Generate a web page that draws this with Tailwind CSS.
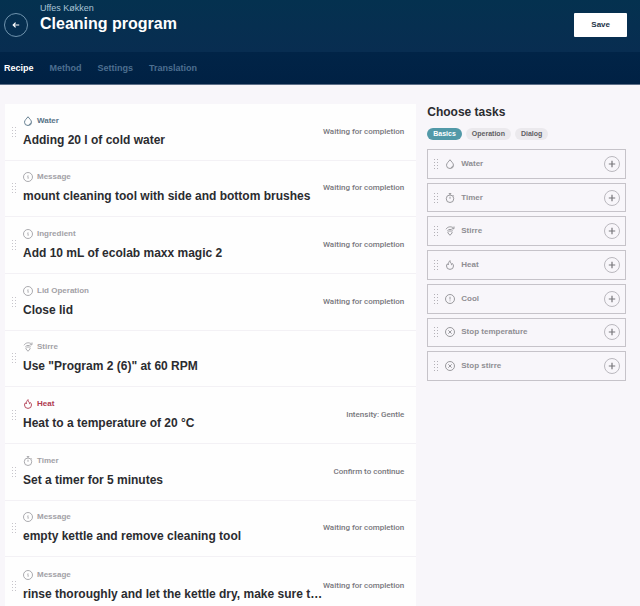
<!DOCTYPE html>
<html lang="en">
<head>
<meta charset="utf-8">
<meta name="viewport" content="width=device-width, initial-scale=1">
<title>Cleaning program</title>
<script src="https://cdn.jsdelivr.net/npm/@tailwindcss/browser@4"></script>
</head>
<body class="bg-[#f8f6fa] font-['Liberation_Sans',Arial,sans-serif] text-[#2b2c30]">
<svg class="hidden" aria-hidden="true">
  <defs>
    <symbol id="water" viewBox="0 0 20 20"><path d="M10 1.500C7.500 5 3 8.500 3 12.500a7 6.500 0 0 0 14 0C17 8.500 12.500 5 10 1.500Z"/><path d="M16.500 14c-1.500 0-3.500 1.500-4 4"/></symbol>
    <symbol id="info" viewBox="0 0 20 20"><circle cx="10" cy="10" r="9"/><path d="M9 9h1.200v4.500M10 6v1.200"/></symbol>
    <symbol id="alert" viewBox="0 0 20 20"><circle cx="10" cy="10" r="9"/><path d="M10 5.500v5.500M10 13v1.500"/></symbol>
    <symbol id="stop" viewBox="0 0 20 20"><circle cx="10" cy="10" r="9"/><path d="m6.700 6.700 6.600 6.600M13.300 6.700l-6.600 6.600"/></symbol>
    <symbol id="timer" viewBox="0 0 20 20"><circle cx="10" cy="11.500" r="7.500"/><path d="M7.500 1.200h5M10 1.200v3M10 7.500v4M16 4.500l1.700 1.700"/></symbol>
    <symbol id="stir" viewBox="0 0 20 20"><path d="M2 6.500C5.500.500 13 .500 17 4M18 1v4.500h-4.500"/><path d="M4.500 10l3.500-3h4l3.500 3"/><path d="M10 9l4.500 4.500L10 18.500l-4.500-5Z"/></symbol>
    <symbol id="heat" viewBox="0 0 20 20"><path d="M10 1.200c-.5 4 3.500 5 3 8.300 1-.5 1.500-1.500 1.700-2.500 1.500 1.500 2.300 3.200 2.300 5a7 6.800 0 0 1-14 0c0-2 .8-3.500 2-4.500.2 1 .6 1.800 1.500 2.500C6.500 6 8 3.500 10 1.200Z"/></symbol>
    <symbol id="plus" viewBox="0 0 20 20"><path d="M10 2v16M2 10h16"/></symbol>
    <symbol id="back" viewBox="0 0 20 20"><path d="M18 10H3M9 4l-6 6 6 6"/></symbol>
    <symbol id="grip" viewBox="0 0 6 12"><path d="M1 1.500h1M4 1.500h1M1 4.500h1M4 4.500h1M1 7.500h1M4 7.500h1M1 10.500h1M4 10.500h1"/></symbol>
  </defs>
</svg>

<header>
  <div class="flex h-[52px] items-start bg-linear-to-b from-[#04314f] to-[#082d51] pl-[4px] pr-[13px]">
    <button type="button" aria-label="Back" class="mt-[13px] flex size-6 items-center justify-center rounded-full border border-[#6f93ad] text-white">
      <svg class="size-[8px] fill-none stroke-current stroke-3"><use href="#back"/></svg>
    </button>
    <div class="ml-3 grow pt-[3px]">
      <p class="text-[9px] leading-[10px] text-[#a9c4d6]">Uffes Køkken</p>
      <h1 class="text-[16px] font-bold leading-[22px] text-white">Cleaning program</h1>
    </div>
    <button type="button" class="mt-[13px] h-6 rounded-[1px] bg-white px-[17px] text-[8px] font-bold text-[#1d3347]">Save</button>
  </div>
  <nav class="flex h-[33px] items-center gap-4 border-b border-[#5d6f88] bg-linear-to-b from-[#012447] to-[#002144] px-[4px] pt-[2px] text-[9px] font-bold text-[#4d6f90]">
    <a href="#recipe" aria-current="page" class="text-white">Recipe</a>
    <a href="#method">Method</a>
    <a href="#settings">Settings</a>
    <a href="#translation">Translation</a>
  </nav>
</header>

<main class="flex items-start gap-[11px] pl-[5px] pr-[14px] pt-[19px]">
  <ol id="steps" class="grid min-h-[510px] min-w-0 grow auto-rows-fr grid-cols-1 divide-y divide-[#f3f1f5] bg-[#fefefe]"></ol>
  <aside class="w-[32%] shrink-0">
    <h2 class="text-[12px] font-bold leading-[16px]">Choose tasks</h2>
    <div class="mt-2 flex gap-1 text-[7px] leading-[12px] text-[#5f5e63]">
      <button type="button" aria-pressed="true" class="rounded-full bg-[#5299a8] px-[6px] font-bold text-white">Basics</button>
      <button type="button" aria-pressed="false" class="rounded-full bg-[#ebe9ed] px-[6px] font-bold">Operation</button>
      <button type="button" aria-pressed="false" class="rounded-full bg-[#ebe9ed] px-[6px] font-bold">Dialog</button>
    </div>
    <ul id="tasks" class="mt-[9px] grid min-h-[232px] auto-rows-fr gap-1"></ul>
  </aside>
</main>

<script>
const steps = [
  ['water', 'Water', 'Adding 20 l of cold water', 'Waiting for completion', 'text-[#587487]'],
  ['info', 'Message', 'mount cleaning tool with side and bottom brushes', 'Waiting for completion'],
  ['info', 'Ingredient', 'Add 10 mL of ecolab maxx magic 2', 'Waiting for completion'],
  ['info', 'Lid Operation', 'Close lid', 'Waiting for completion'],
  ['stir', 'Stirre', 'Use "Program 2 (6)" at 60 RPM', ''],
  ['heat', 'Heat', 'Heat to a temperature of 20 °C', 'Intensity: Gentle', 'text-[#b03a50]'],
  ['timer', 'Timer', 'Set a timer for 5 minutes', 'Confirm to continue'],
  ['info', 'Message', 'empty kettle and remove cleaning tool', 'Waiting for completion'],
  ['info', 'Message', 'rinse thoroughly and let the kettle dry, make sure t…', 'Waiting for completion'],
];
const tasks = [
  ['water', 'Water'], ['timer', 'Timer'], ['stir', 'Stirre'], ['heat', 'Heat'],
  ['alert', 'Cool'], ['stop', 'Stop temperature'], ['stop', 'Stop stirre'],
];
document.getElementById('steps').innerHTML = steps.map(([icon, type, title, status, tone = 'text-[#a2a1a6]']) => `
  <li class="flex items-center pl-[6px] pr-3">
    <svg class="h-3 w-[6px] shrink-0 fill-none stroke-[#c6c4ca] stroke-1"><use href="#grip"/></svg>
    <div class="ml-[6px] min-w-0 grow">
      <p class="flex items-center gap-1 text-[8px] font-bold leading-[12px] ${tone}">
        <svg class="size-[10px] fill-none stroke-current stroke-[1.8]"><use href="#${icon}"/></svg>${type}
      </p>
      <h3 class="mt-1 truncate text-[12px] font-bold leading-[18px]">${title}</h3>
    </div>
    <p class="shrink-0 font-['Roboto',sans-serif] text-[8px] font-medium text-[#77767c]">${status}</p>
  </li>`).join('');
document.getElementById('tasks').innerHTML = tasks.map(([icon, name]) => `
  <li class="flex items-center border border-[#c6c3c9] px-[5px] text-[#8f8e93]">
    <svg class="h-3 w-[6px] fill-none stroke-[#b3b1b7] stroke-1"><use href="#grip"/></svg>
    <svg class="ml-[6px] size-[10px] fill-none stroke-current stroke-[1.8]"><use href="#${icon}"/></svg>
    <span class="ml-[6px] grow text-[8px] font-bold">${name}</span>
    <button type="button" aria-label="Add ${name}" class="flex size-4 items-center justify-center rounded-full border border-[#bab8be] text-[#77767b]">
      <svg class="size-[8px] fill-none stroke-current stroke-3"><use href="#plus"/></svg>
    </button>
  </li>`).join('');
</script>
</body>
</html>
